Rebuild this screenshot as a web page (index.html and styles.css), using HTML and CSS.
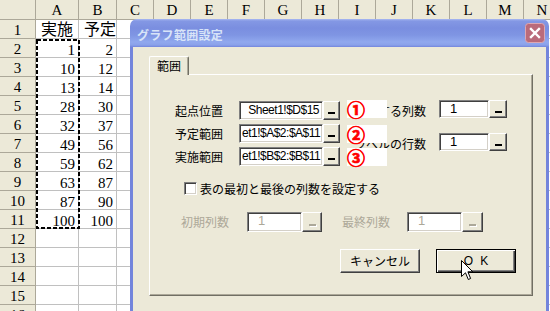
FILE: index.html
```html
<!DOCTYPE html>
<html lang="ja">
<head>
<meta charset="utf-8">
<title>グラフ範囲設定</title>
<link rel="stylesheet" href="styles.css">
</head>
<body>
<div class="sheet">
<i class="h"></i><i class="h">A</i><i class="h">B</i><i class="h">C</i><i class="h">D</i><i class="h">E</i><i class="h">F</i><i class="h">G</i><i class="h">H</i><i class="h">I</i><i class="h">J</i><i class="h">K</i><i class="h">L</i><i class="h">M</i><i class="h">N</i>
<i class="h">1</i><i class="t">実施</i><i class="t">予定</i><i></i><i></i><i></i><i></i><i></i><i></i><i></i><i></i><i></i><i></i><i></i><i></i>
<i class="h">2</i><i class="n">1</i><i class="n">2</i><i></i><i></i><i></i><i></i><i></i><i></i><i></i><i></i><i></i><i></i><i></i><i></i>
<i class="h">3</i><i class="n">10</i><i class="n">12</i><i></i><i></i><i></i><i></i><i></i><i></i><i></i><i></i><i></i><i></i><i></i><i></i>
<i class="h">4</i><i class="n">13</i><i class="n">14</i><i></i><i></i><i></i><i></i><i></i><i></i><i></i><i></i><i></i><i></i><i></i><i></i>
<i class="h">5</i><i class="n">28</i><i class="n">30</i><i></i><i></i><i></i><i></i><i></i><i></i><i></i><i></i><i></i><i></i><i></i><i></i>
<i class="h">6</i><i class="n">32</i><i class="n">37</i><i></i><i></i><i></i><i></i><i></i><i></i><i></i><i></i><i></i><i></i><i></i><i></i>
<i class="h">7</i><i class="n">49</i><i class="n">56</i><i></i><i></i><i></i><i></i><i></i><i></i><i></i><i></i><i></i><i></i><i></i><i></i>
<i class="h">8</i><i class="n">59</i><i class="n">62</i><i></i><i></i><i></i><i></i><i></i><i></i><i></i><i></i><i></i><i></i><i></i><i></i>
<i class="h">9</i><i class="n">63</i><i class="n">87</i><i></i><i></i><i></i><i></i><i></i><i></i><i></i><i></i><i></i><i></i><i></i><i></i>
<i class="h">10</i><i class="n">87</i><i class="n">90</i><i></i><i></i><i></i><i></i><i></i><i></i><i></i><i></i><i></i><i></i><i></i><i></i>
<i class="h">11</i><i class="n">100</i><i class="n">100</i><i></i><i></i><i></i><i></i><i></i><i></i><i></i><i></i><i></i><i></i><i></i><i></i>
<i class="h">12</i><i></i><i></i><i></i><i></i><i></i><i></i><i></i><i></i><i></i><i></i><i></i><i></i><i></i><i></i>
<i class="h">13</i><i></i><i></i><i></i><i></i><i></i><i></i><i></i><i></i><i></i><i></i><i></i><i></i><i></i><i></i>
<i class="h">14</i><i></i><i></i><i></i><i></i><i></i><i></i><i></i><i></i><i></i><i></i><i></i><i></i><i></i><i></i>
<i class="h">15</i><i></i><i></i><i></i><i></i><i></i><i></i><i></i><i></i><i></i><i></i><i></i><i></i><i></i><i></i>
<i class="h">16</i><i></i><i></i><i></i><i></i><i></i><i></i><i></i><i></i><i></i><i></i><i></i><i></i><i></i><i></i>
</div>

<svg class="ants" width="44" height="192" viewBox="0 0 44 192"><rect x="1" y="1" width="42" height="188" fill="none" stroke="#000" stroke-width="2" stroke-dasharray="4 2"/></svg>

<div class="dialog">
  <div class="titlebar">
    <span class="title">グラフ範囲設定</span>
    <span class="close"><svg width="20" height="20" viewBox="0 0 20 20"><rect x="0.5" y="0.5" width="19" height="19" rx="3" fill="#BA6B7B" stroke="#DDA7B2"/><path d="M6 6 L14 14 M14 6 L6 14" stroke="#fff" stroke-width="2.4" stroke-linecap="square"/></svg></span>
  </div>
  <div class="client">
    <div class="tabs"><div class="tab">範囲</div></div>
    <div class="panel">
      <div class="ranges">
        <div class="range-grid">
          <span class="lbl">起点位置</span>
          <div class="field"><div class="tbox right">Sheet1!$D$15</div><div class="btn-ref"><i></i></div><span class="marker">①</span></div>
          <span class="lbl">予定範囲</span>
          <div class="field"><div class="tbox">et1!$A$2:$A$11</div><div class="btn-ref"><i></i></div><span class="marker low">②</span></div>
          <span class="lbl">実施範囲</span>
          <div class="field"><div class="tbox">et1!$B$2:$B$11</div><div class="btn-ref"><i></i></div><span class="marker low">③</span></div>
        </div>
        <div class="count-grid">
          <span class="lbl r">開始する列数</span>
          <div class="field"><div class="tbox num">1</div><div class="btn-ref"><i></i></div></div>
          <span class="lbl r">ラベルの行数</span>
          <div class="field"><div class="tbox num">1</div><div class="btn-ref"><i></i></div></div>
        </div>
      </div>
      <div class="check-row"><span class="check"></span><span>表の最初と最後の列数を設定する</span></div>
      <div class="dis-row">
        <span class="dlbl">初期列数</span>
        <div class="field dis"><div class="tbox num">1</div><div class="btn-ref"><i></i></div></div>
        <span class="dlbl second">最終列数</span>
        <div class="field dis"><div class="tbox num">1</div><div class="btn-ref"><i></i></div></div>
      </div>
      <div class="btn-row">
        <div class="btn">キャンセル</div>
        <div class="btn default"><span class="ok">O K</span></div>
      </div>
    </div>
  </div>
</div>

<svg class="cursor" width="13" height="21" viewBox="0 0 13 21"><path d="M0.5 0.5 L0.5 16.5 L4.5 12.8 L7.3 19.5 L9.6 18.5 L6.9 11.8 L11.8 11.8 Z" fill="#fff" stroke="#000" stroke-width="1" stroke-linejoin="miter"/></svg>
</body>
</html>
```

FILE: styles.css
```css
* { box-sizing: border-box; }
html, body { margin: 0; padding: 0; width: 550px; height: 311px; overflow: hidden; }
body {
  position: relative;
  background: #fff;
  font-family: "Liberation Serif", "Noto Sans CJK JP", serif;
}

/* spreadsheet */
.sheet {
  display: grid;
  grid-template-columns: 36px 43px 38px repeat(12, 37px);
  grid-template-rows: 20px repeat(16, 19px);
}
.sheet > i {
  font-style: normal;
  display: block;
  border-right: 1px solid #C0C0C0;
  border-bottom: 1px solid #C0C0C0;
  font-size: 15px;
  line-height: 18px;
  padding-top: 1px;
  overflow: hidden;
  white-space: nowrap;
  color: #000;
}
.sheet > .h {
  background: #ECE9D8;
  border-color: #ACA899;
  text-align: center;
}
.sheet > .n { text-align: right; padding-right: 3px; padding-top: 2px; }
.sheet > .t { font-size: 16px; padding-left: 5px; line-height: 17px; }

.ants { position: absolute; left: 36px; top: 39px; }

/* dialog */
.dialog {
  position: absolute;
  left: 130px;
  top: 19px;
  width: 419px;
  height: 300px;
  display: flex;
  flex-direction: column;
  font-family: "Noto Sans CJK JP", "Liberation Sans", sans-serif;
  font-size: 12px;
  color: #000;
}
.titlebar {
  flex: none;
  height: 28px;
  border-radius: 7px 7px 0 0;
  background: linear-gradient(to bottom, #A9B9F2 0, #8498E4 2px, #7A8EE0 9px, #7F95E3 16px, #90A8EE 23px, #8AA1EA 26px, #7385DC 28px);
  display: flex;
  align-items: center;
  padding: 1px 4px 0 7px;
}
.title {
  flex: 1;
  color: #D8E4F8;
  font-weight: bold;
  font-size: 12px;
  letter-spacing: 0.3px;
  line-height: 14px;
  padding-top: 2px;
}
.close { width: 20px; height: 20px; display: block; margin-top: -1px; }
.close svg { display: block; }

.client {
  flex: 1;
  background: #ECE9D8;
  border: 3px solid #7385DC;
  border-top: 0;
  padding: 9px 13px 0 16px;
}
.tabs { display: flex; height: 18px; position: relative; z-index: 1; }
.tab {
  width: 40px;
  height: 19px;
  background: #ECE9D8;
  border-top: 1px solid #fff;
  border-left: 1px solid #fff;
  border-right: 1px solid #716F64;
  box-shadow: inset -1px 0 #ACA899;
  border-radius: 2px 2px 0 0;
  padding-left: 7px;
  line-height: 17px;
}
.panel {
  height: 222px;
  border: 1px solid;
  border-color: #fff #716F64 #716F64 #fff;
  box-shadow: inset -1px -1px #ACA899;
  padding: 25px 16px 0 25px;
}

.ranges { display: flex; align-items: flex-start; height: 66px; }
.range-grid {
  display: grid;
  grid-template-columns: 64px 101px;
  grid-auto-rows: 19px;
  row-gap: 4px;
  margin-top: 1px;
  align-items: center;
}
.count-grid {
  margin-left: 10px;
  display: grid;
  grid-template-columns: 76px 68px;
  column-gap: 13px;
  grid-auto-rows: 18px;
  row-gap: 15px;
  align-items: center;
}
.lbl { line-height: 14px; white-space: nowrap; }
.lbl.r { text-align: right; padding-top: 3px; }

.field { display: flex; position: relative; height: 100%; }
.tbox {
  flex: 1;
  min-width: 0;
  background: #fff;
  border: 1px solid;
  border-color: #808080 #fff #fff #808080;
  box-shadow: inset 1px 1px #404040, inset -1px -1px #D4D0C8;
  font-family: "Liberation Sans", sans-serif;
  font-size: 12px;
  letter-spacing: -0.5px;
  line-height: 17px;
  padding: 0 2px;
  overflow: hidden;
  white-space: nowrap;
}
.tbox.right { text-align: right; padding-right: 3px; }
.tbox.num { padding-left: 10px; font-size: 13px; letter-spacing: 0; line-height: 16px; }
.btn-ref {
  width: 17px;
  flex: none;
  background: #ECE9D8;
  border: 1px solid;
  border-color: #fff #404040 #404040 #fff;
  box-shadow: inset -1px -1px #808080;
  display: flex;
  align-items: flex-end;
  justify-content: center;
  padding-bottom: 5px;
}
.btn-ref i { display: block; width: 7px; height: 2px; background: #000; }
.count-grid .btn-ref { width: 18px; padding-bottom: 4px; }

.marker {
  position: absolute;
  left: 108px;
  top: -1px;
  width: 40px;
  height: 18px;
  background: #fff;
  color: #f00;
  font-family: "Noto Sans CJK JP", sans-serif;
  font-weight: bold;
  font-size: 18px;
  line-height: 18px;
  -webkit-text-stroke: 0.7px #f00;
  z-index: 2;
}
.marker.low { top: 1px; }

.check-row {
  display: flex;
  align-items: center;
  gap: 3px;
  height: 13px;
  margin: 16px 0 0 9px;
  line-height: 14px;
}
.check {
  width: 13px;
  height: 13px;
  background: #fff;
  border: 1px solid;
  border-color: #808080 #fff #fff #808080;
  box-shadow: inset 1px 1px #404040, inset -1px -1px #D4D0C8;
}

.dis-row {
  display: flex;
  align-items: center;
  height: 20px;
  margin: 17px 0 0 6px;
  color: #ACA899;
}
.dlbl { width: 66px; flex: none; line-height: 14px; }
.dlbl.second { margin-left: 20px; width: 65px; }
.field.dis { width: 75px; flex: none; }
.field.dis .tbox { color: #ACA899; }
.field.dis .btn-ref { width: 20px; padding-bottom: 5px; }
.field.dis .btn-ref i { background: #ACA899; box-shadow: 1px 1px #fff; }
.field.dis + .dlbl + .field.dis { width: 76px; }
.field.dis + .dlbl + .field.dis .btn-ref { width: 21px; }

.btn-row {
  display: flex;
  justify-content: flex-end;
  gap: 16px;
  margin-top: 17px;
}
.btn {
  width: 80px;
  height: 24px;
  background: #ECE9D8;
  border: 1px solid;
  border-color: #fff #404040 #404040 #fff;
  box-shadow: inset -1px -1px #808080;
  display: flex;
  align-items: center;
  justify-content: center;
  line-height: 14px;
}
.btn.default {
  border: 1px solid #000;
  box-shadow: inset 1px 1px #fff, inset -1px -1px #404040, inset -2px -2px #808080;
}
.ok { font-family: "Liberation Sans", sans-serif; font-size: 12px; word-spacing: 4px; }

.cursor { position: absolute; left: 461px; top: 260px; }
```
